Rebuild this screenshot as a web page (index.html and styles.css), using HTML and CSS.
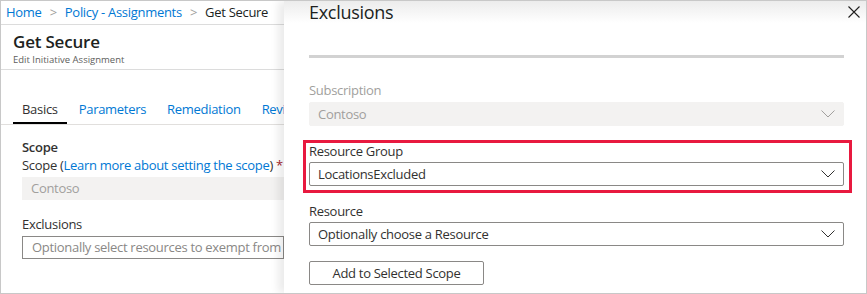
FILE: index.html
```html
<!DOCTYPE html>
<html lang="en">
<head>
  <meta charset="UTF-8">
  <title>Get Secure - Exclusions</title>
  <link rel="stylesheet" href="styles.css">
</head>
<body>
  <div class="frame">

    <!-- Panel de la asignación -->
    <section class="assignment">
      <nav class="crumbs">
        <a href="#">Home</a>
        <span class="sep">&gt;</span>
        <a href="#">Policy - Assignments</a>
        <span class="sep">&gt;</span>
        <span class="current">Get Secure</span>
      </nav>

      <div class="page-head">
        <h1>Get Secure</h1>
        <p>Edit Initiative Assignment</p>
      </div>

      <ul class="tabs">
        <li class="active">Basics</li>
        <li>Parameters</li>
        <li>Remediation</li>
        <li>Review + create</li>
      </ul>

      <div class="form">
        <h3>Scope</h3>
        <div class="scope-line">Scope (<a href="#">Learn more about setting the scope</a>) <span class="req">*</span></div>
        <div class="field disabled">Contoso</div>

        <label class="field-label">Exclusions</label>
        <div class="field outlined">Optionally select resources to exempt from the policy assignment</div>
      </div>
    </section>

    <!-- Hoja de exclusiones -->
    <section class="blade">
      <div class="blade-head">
        <h2>Exclusions</h2>
        <button class="close" aria-label="Close">
          <svg width="12" height="12" viewBox="0 0 12 12"><path d="M0.5 0.5 L11.5 11.5 M11.5 0.5 L0.5 11.5" stroke="#201f1e" stroke-width="1.1" fill="none"/></svg>
        </button>
      </div>

      <div class="blade-body">
        <div class="bar"></div>

        <label class="field-label muted">Subscription</label>
        <div class="select disabled">
          <span>Contoso</span>
          <svg class="chev" width="14" height="8" viewBox="0 0 14 8"><path d="M0.5 0.5 L7 7 L13.5 0.5" stroke="#a19f9d" fill="none"/></svg>
        </div>

        <div class="highlight">
          <label class="field-label">Resource Group</label>
          <div class="select">
            <span>LocationsExcluded</span>
            <svg class="chev" width="14" height="8" viewBox="0 0 14 8"><path d="M0.5 0.5 L7 7 L13.5 0.5" stroke="#323130" fill="none"/></svg>
          </div>
        </div>

        <label class="field-label after-box">Resource</label>
        <div class="select">
          <span>Optionally choose a Resource</span>
          <svg class="chev" width="14" height="8" viewBox="0 0 14 8"><path d="M0.5 0.5 L7 7 L13.5 0.5" stroke="#323130" fill="none"/></svg>
        </div>

        <button class="add-btn">Add to Selected Scope</button>
      </div>
    </section>

  </div>
</body>
</html>
```

FILE: styles.css
```css
/* Estilos generales */
* {
  margin: 0;
  padding: 0;
  box-sizing: border-box;
}

body {
  font-family: 'Open Sans', 'Noto Sans', sans-serif;
  font-size: 13px;
  color: #323130;
  background: #fff;
}

a {
  color: #0078d4;
  text-decoration: none;
}

.frame {
  width: 867px;
  height: 294px;
  border: 1px solid #c8c8c8;
  display: flex;
  overflow: hidden;
}

/* Panel izquierdo */
.assignment {
  width: 283px;
  flex-shrink: 0;
  overflow: hidden;
  white-space: nowrap;
}

.crumbs {
  height: 24px;
  padding-left: 5px;
  line-height: 22px;
  border-bottom: 1px solid #dcdcdc;
  letter-spacing: -0.3px;
}

.crumbs .sep {
  color: #a19f9d;
  margin: 0 5px;
}

.crumbs .current {
  color: #201f1e;
}

.page-head {
  height: 45px;
  padding: 6px 0 0 12px;
  border-bottom: 1px solid #dcdcdc;
}

.page-head h1 {
  font-size: 17px;
  font-weight: 600;
  line-height: 22px;
  letter-spacing: -0.2px;
  color: #201f1e;
}

.page-head p {
  font-size: 9.5px;
  color: #605e5c;
  line-height: 14px;
}

.tabs {
  list-style: none;
  display: flex;
  gap: 3px;
  height: 55px;
  padding: 29px 0 0 12px;
  border-bottom: 1px solid #e1dfdd;
  letter-spacing: -0.3px;
}

.tabs li {
  color: #0078d4;
  padding: 0 9px 3px;
  line-height: 20px;
  height: 25px;
}

.tabs li.active {
  color: #323130;
  border-bottom: 2px solid #000;
}

.form {
  padding: 12px 0 0 21px;
  letter-spacing: -0.3px;
}

.form h3 {
  font-size: 13px;
  font-weight: 600;
  line-height: 20px;
}

.scope-line {
  line-height: 16px;
}

.scope-line .req {
  color: #a4262c;
}

.field {
  height: 23px;
  line-height: 23px;
  padding-left: 9px;
  margin-top: 4px;
}

.field.disabled {
  background: #f3f2f1;
  color: #a19f9d;
}

.field.outlined {
  border: 1px solid #8a8886;
  line-height: 21px;
  color: #8a8886;
  margin-top: 2px;
}

.field-label {
  display: block;
  line-height: 20px;
  margin-top: 14px;
}

/* Hoja de exclusiones */
.blade {
  flex: 1;
  position: relative;
  box-shadow: -6px 0 8px rgba(0, 0, 0, 0.08);
  background: #fff;
  letter-spacing: -0.3px;
}

.blade-head {
  height: 28px;
  background: linear-gradient(#ececec, #fff 22px);
  padding-left: 25px;
}

.blade-head h2 {
  font-size: 18px;
  font-weight: 400;
  line-height: 23px;
  color: #201f1e;
}

.close {
  position: absolute;
  top: 5px;
  right: 6px;
  border: none;
  background: none;
  width: 12px;
  height: 12px;
  display: flex;
}

.blade-body {
  padding: 26px 22px 0 25px;
}

.bar {
  height: 3px;
  background: #d2d2d2;
}

.blade-body .field-label {
  margin-top: 22px;
}

.field-label.muted {
  color: #a19f9d;
}

.select {
  height: 24px;
  margin-top: 2px;
  border: 1px solid #8a8886;
  border-radius: 2px;
  display: flex;
  align-items: center;
  justify-content: space-between;
  padding: 0 8px;
}

.select.disabled {
  border-color: #f3f2f1;
  background: #f3f2f1;
  color: #a19f9d;
}

.highlight {
  border: 3px solid #e8193f;
  margin: 14px -8px 0 -6px;
  padding: 0 5px 4px 3px;
}

.blade-body .highlight .field-label {
  margin-top: 0;
  line-height: 16px;
}

.highlight .select {
  margin-top: 3px;
}

.blade-body .field-label.after-box {
  margin-top: 8px;
}

.after-box + .select {
  margin-top: 1px;
}

.add-btn {
  margin-top: 15px;
  height: 24px;
  width: 175px;
  border: 1px solid #8a8886;
  border-radius: 2px;
  background: #fff;
  font-family: inherit;
  font-size: 13px;
  color: #323130;
  letter-spacing: -0.3px;
}
```
